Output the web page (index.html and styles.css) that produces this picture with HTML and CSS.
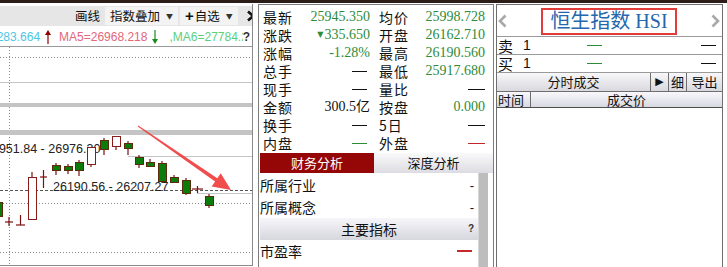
FILE: index.html
```html
<!DOCTYPE html>
<html lang="zh-CN">
<head>
    <meta charset="UTF-8">
    <title>恒生指数 HSI</title>
    <link rel="stylesheet" href="styles.css">
</head>
<body>
    <div class="topbar"></div>
    <div class="main">

        <!-- K-line panel -->
        <div class="chart-panel">
            <div class="toolbar">
                <span class="tool">画线</span>
                <span class="tool tool-box">指数叠加<i class="caret">▼</i></span>
                <span class="tool tool-box"><b class="plus">+</b>自选<i class="caret">▼</i></span>
                <svg class="tool-end" width="14" height="12" viewBox="0 0 14 12">
                    <polyline points="2,1.5 7,6 2,10.5" fill="none" stroke="#111" stroke-width="2.6"/>
                    <rect x="10" y="1" width="2.6" height="10" fill="#111"/>
                </svg>
            </div>
            <div class="ma-row">
                <span class="ma-cyan">3283.664</span>
                <svg class="ma-arrow" width="6" height="14" viewBox="0 0 6 14">
                    <line x1="3" y1="2" x2="3" y2="14" stroke="#8b0000" stroke-width="1.2"/>
                    <polygon points="0,5 3,0 6,5" fill="#8b0000"/>
                </svg>
                <span class="ma-red">MA5=26968.218</span>
                <svg class="ma-arrow" width="6" height="14" viewBox="0 0 6 14">
                    <line x1="3" y1="0" x2="3" y2="12" stroke="#1a8a1a" stroke-width="1.2"/>
                    <polygon points="0,9 3,14 6,9" fill="#1a8a1a"/>
                </svg>
                <span class="ma-green">,MA6=27784.23</span>
                <span class="ma-help">?</span>
            </div>
            <svg class="chart" width="252" height="218" viewBox="0 47 252 218">
                <g stroke="#8c8c8c" stroke-dasharray="1 2">
                    <line x1="9.5" y1="47" x2="9.5" y2="265"/>
                    <line x1="0" y1="57.5" x2="252" y2="57.5"/>
                    <line x1="0" y1="203.5" x2="252" y2="203.5"/>
                    <line x1="0" y1="252.5" x2="252" y2="252.5"/>
                </g>
                <line x1="0" y1="82.5" x2="252" y2="82.5" stroke="#c4c4c4"/>
                <rect x="0" y="103" width="252" height="4" fill="#c4c4c4"/>
                <rect x="0" y="130" width="252" height="5" fill="#c4c4c4"/>
                <line x1="128" y1="156.5" x2="252" y2="156.5" stroke="#c4c4c4"/>
                <line x1="197" y1="193.5" x2="252" y2="193.5" stroke="#c4c4c4"/>
                <line x1="0" y1="190.5" x2="252" y2="190.5" stroke="#555" stroke-dasharray="3 2"/>

                <text class="range" x="-15" y="153">26951.84 - 26976.30</text>
                <text class="range" x="53" y="191">26190.56 - 26207.27</text>

                <!-- wicks and crosses -->
                <g stroke="#7a1010" stroke-width="1.2">
                    <line x1="5" y1="222" x2="13" y2="222"/>
                    <line x1="9" y1="217" x2="9" y2="226"/>
                    <line x1="20.5" y1="215" x2="20.5" y2="225"/>
                    <line x1="16" y1="225" x2="25" y2="225"/>
                    <line x1="32" y1="172" x2="32" y2="177"/>
                    <line x1="40" y1="177" x2="47" y2="177"/>
                    <line x1="43.5" y1="170" x2="43.5" y2="188"/>
                    <line x1="56" y1="163" x2="56" y2="175"/>
                    <line x1="68" y1="164" x2="68" y2="174"/>
                    <line x1="79" y1="160" x2="79" y2="176"/>
                    <line x1="91" y1="164" x2="91" y2="167"/>
                    <line x1="104" y1="138" x2="104" y2="155"/>
                    <line x1="116" y1="146" x2="116" y2="150"/>
                    <line x1="128" y1="141" x2="128" y2="155"/>
                    <line x1="139" y1="155" x2="139" y2="168"/>
                    <line x1="150" y1="159" x2="150" y2="167"/>
                    <line x1="162" y1="161" x2="162" y2="183"/>
                    <line x1="174" y1="175" x2="174" y2="183"/>
                    <line x1="186" y1="178" x2="186" y2="195"/>
                    <line x1="192" y1="189" x2="203" y2="189"/>
                    <line x1="197.5" y1="186" x2="197.5" y2="193"/>
                    <line x1="209" y1="194" x2="209" y2="208"/>
                </g>

                <!-- falling candles -->
                <g fill="#0b7b0b" stroke="#5a2a0a">
                    <rect x="-5.5" y="202.5" width="8" height="14"/>
                    <rect x="52.5" y="165.5" width="8" height="5"/>
                    <rect x="64.5" y="166.5" width="8" height="4"/>
                    <rect x="75.5" y="162.5" width="8" height="8"/>
                    <rect x="100.5" y="140.5" width="8" height="9"/>
                    <rect x="124.5" y="143.5" width="8" height="5"/>
                    <rect x="135.5" y="157.5" width="8" height="7"/>
                    <rect x="146.5" y="162.5" width="8" height="4"/>
                    <rect x="158.5" y="163.5" width="8" height="18"/>
                    <rect x="170.5" y="177.5" width="8" height="5"/>
                    <rect x="182.5" y="180.5" width="8" height="13"/>
                    <rect x="205.5" y="196.5" width="8" height="9"/>
                </g>

                <!-- rising candles -->
                <g fill="#fff" stroke="#8b1a1a">
                    <rect x="28.5" y="177.5" width="8" height="42"/>
                    <rect x="87.5" y="147.5" width="8" height="17"/>
                    <rect x="112.5" y="136.5" width="8" height="10"/>
                </g>

                <polygon class="arrow" points="138.3,125.6 217.3,178.2 220.7,173.2 231,190 211.7,186.4 215.1,181.4 137.7,126.4"/>
            </svg>
        </div>

        <!-- Quote panel -->
        <div class="quote-panel">
            <div class="quote-grid">
                <span class="q-label">最新</span><span class="q-val up">25945.350</span>
                <span class="q-label q-label2">均价</span><span class="q-val up">25998.728</span>

                <span class="q-label">涨跌</span><span class="q-val up"><i class="tri">▼</i>335.650</span>
                <span class="q-label q-label2">开盘</span><span class="q-val up">26162.710</span>

                <span class="q-label">涨幅</span><span class="q-val up">-1.28%</span>
                <span class="q-label q-label2">最高</span><span class="q-val up">26190.560</span>

                <span class="q-label">总手</span><span class="q-val"><i class="dash"></i></span>
                <span class="q-label q-label2">最低</span><span class="q-val up">25917.680</span>

                <span class="q-label">现手</span><span class="q-val"><i class="dash"></i></span>
                <span class="q-label q-label2">量比</span><span class="q-val"><i class="dash"></i></span>

                <span class="q-label">金额</span><span class="q-val">300.5亿</span>
                <span class="q-label q-label2">按盘</span><span class="q-val up">0.000</span>

                <span class="q-label">换手</span><span class="q-val"><i class="dash"></i></span>
                <span class="q-label q-label2">5日</span><span class="q-val"><i class="dash"></i></span>

                <span class="q-label">内盘</span><span class="q-val"><i class="dash dash-green"></i></span>
                <span class="q-label q-label2">外盘</span><span class="q-val"><i class="dash dash-red"></i></span>
            </div>

            <div class="tabs">
                <span class="tab tab-active">财务分析</span>
                <span class="tab">深度分析</span>
            </div>

            <div class="info">
                <div class="info-list">
                    <div class="info-row"><span>所属行业</span><span class="info-val">-</span></div>
                    <div class="info-row"><span>所属概念</span><span class="info-val">-</span></div>
                    <div class="info-head">主要指标<span class="info-help">?</span></div>
                    <div class="info-row"><span>市盈率</span><span class="info-dash"></span></div>
                </div>
                <div class="scrollbar"></div>
            </div>
        </div>

        <!-- Order book / trades panel -->
        <div class="depth-panel">
            <div class="title-row">
                <svg width="9" height="14" viewBox="0 0 9 14"><polyline points="7.5,1.5 2,7 7.5,12.5" fill="none" stroke="#a8a8a8" stroke-width="2.6"/></svg>
                <span class="title">恒生指数 HSI</span>
                <svg width="9" height="14" viewBox="0 0 9 14"><polyline points="1.5,1.5 7,7 1.5,12.5" fill="none" stroke="#a8a8a8" stroke-width="2.6"/></svg>
            </div>
            <div class="book-row">
                <span class="book-label">卖</span><span class="book-num">1</span>
                <i class="dash dash-green book-dash"></i>
                <i class="dash book-dash book-last"></i>
            </div>
            <div class="book-row">
                <span class="book-label">买</span><span class="book-num">1</span>
                <i class="dash dash-green book-dash"></i>
                <i class="dash book-dash book-last"></i>
            </div>
            <div class="trade-bar">
                <span class="trade-title">分时成交</span>
                <span class="trade-btn trade-play">▶</span>
                <span class="trade-btn">细</span>
                <span class="trade-btn trade-export">导出</span>
            </div>
            <div class="trade-head">
                <span class="th-time">时间</span>
                <span class="th-price">成交价</span>
            </div>
        </div>
    </div>
</body>
</html>
```

FILE: styles.css
```css
* {
    box-sizing: border-box;
}
body {
    margin: 0;
    width: 727px;
    height: 267px;
    overflow: hidden;
    background: #fff;
    color: #111;
    font-family: "Noto Sans CJK SC", sans-serif;
}
i {
    font-style: normal;
}
.topbar {
    height: 3px;
    background: #2d1d19;
}
.main {
    display: flex;
    align-items: flex-start;
    padding-top: 1px;
}

/* chart */
.chart-panel {
    flex: none;
    width: 253px;
    height: 262px;
    padding-top: 2px;
    border-right: 1px solid #8a8a8a;
    border-bottom: 1px solid #8a8a8a;
    overflow: hidden;
}
.toolbar {
    display: flex;
    align-items: center;
    height: 20px;
    padding-left: 75px;
    background: #e6e6e6;
    font-size: 12.5px;
    line-height: 16px;
    white-space: nowrap;
}
.tool {
    flex: none;
    margin-right: 5px;
}
.tool-box {
    display: flex;
    align-items: center;
    height: 18px;
    padding: 0 5px;
    background: #f3f3f3;
    margin-right: 2px;
}
.plus {
    font-family: "Liberation Sans", sans-serif;
    font-size: 15px;
    margin-right: 1px;
}
.caret {
    font-size: 7px;
    margin-left: 6px;
    color: #333;
}
.tool-end {
    flex: none;
    margin-left: 6px;
}
.ma-row {
    display: flex;
    align-items: center;
    height: 21px;
    padding-top: 2px;
    border-bottom: 1px solid #9a9a9a;
    white-space: nowrap;
    overflow: hidden;
    font-family: "Liberation Sans", sans-serif;
    font-size: 12px;
}
.ma-cyan {
    flex: none;
    margin-left: -10px;
    color: #4ec6e6;
}
.ma-red {
    flex: none;
    color: #e4667a;
}
.ma-green {
    flex: 0 1 auto;
    min-width: 0;
    overflow: hidden;
    color: #5ccf7c;
    margin-left: 3px;
}
.ma-arrow {
    flex: none;
    margin: 0 8px 0 5px;
}
.ma-help {
    flex: none;
    margin: 0 2px 0 auto;
    font-weight: bold;
    font-size: 12px;
    color: #333;
}
.chart {
    display: block;
}
.range {
    font-family: "Liberation Sans", sans-serif;
    font-size: 12.5px;
    fill: #222;
}
.arrow {
    fill: #f03a3a;
    opacity: 0.9;
}

/* quote */
.quote-panel {
    flex: none;
    width: 236px;
    height: 270px;
    margin-left: 5px;
    border: 1px solid #7d7d7d;
    overflow: hidden;
}
.quote-grid {
    display: grid;
    grid-template-columns: 40px 67px 49px 66px;
    grid-auto-rows: 18px;
    padding: 3px 0 0 4px;
    line-height: 18px;
}
.q-label {
    font-size: 14px;
    letter-spacing: 1px;
    white-space: nowrap;
}
.q-label2 {
    padding-left: 9px;
}
.q-val {
    display: flex;
    align-items: center;
    justify-content: flex-end;
    font-family: "Liberation Serif", "Noto Sans CJK SC", serif;
    font-size: 14px;
    color: #111;
}
.q-val.up {
    color: #2e8b3a;
}
.tri {
    font-family: "DejaVu Sans", sans-serif;
    font-size: 8px;
    margin-right: 1px;
}
.dash {
    display: inline-block;
    width: 15px;
    height: 1px;
    background: #111;
    margin-right: 3px;
}
.q-label2 + .q-val .dash {
    width: 17px;
    margin-right: 0;
}
.dash-green {
    background: #2e8b3a;
}
.dash-red {
    background: #c0282a;
}
.tabs {
    display: flex;
    height: 20px;
    margin: 1px 0 0 1px;
    font-size: 13px;
    line-height: 20px;
}
.tab {
    flex: 1;
    text-align: center;
    background: linear-gradient(#fafafa, #dcdce2);
}
.tab-active {
    flex: none;
    width: 114px;
    background: #950606;
    color: #fff;
}
.info {
    display: flex;
    padding-left: 1px;
}
.info-list {
    flex: none;
    width: 218px;
    padding-top: 1px;
    font-size: 14px;
}
.info-row {
    display: flex;
    align-items: center;
    justify-content: space-between;
    height: 22px;
    padding-right: 4px;
}
.info-val {
    font-family: "Liberation Sans", sans-serif;
    font-size: 13px;
}
.info-dash {
    flex: none;
    width: 15px;
    height: 2px;
    margin-right: 2px;
    background: #c8282a;
}
.info-head {
    position: relative;
    height: 22px;
    line-height: 22px;
    text-align: center;
    background: linear-gradient(#f6f6fa, #d6d6de);
}
.info-help {
    position: absolute;
    right: 4px;
    top: 0;
    font-family: "Liberation Sans", sans-serif;
    font-size: 10px;
    font-weight: bold;
    color: #333;
}
.scrollbar {
    flex: none;
    width: 10px;
    height: 100px;
    background: #bdbdbd;
    border-left: 1px solid #d6d6d6;
}

/* depth */
.depth-panel {
    flex: none;
    width: 227px;
    height: 270px;
    margin-left: 2px;
    border: 1px solid #6e6e6e;
    overflow: hidden;
}
.title-row {
    display: flex;
    align-items: center;
    justify-content: space-between;
    height: 32px;
    padding: 0 2px 0 1px;
    border-bottom: 1px solid #9a9a9a;
}
.title {
    width: 136px;
    height: 27px;
    margin-top: 1px;
    border: 2px solid #e03c3c;
    color: #2667ad;
    font-family: "Liberation Serif", "Noto Sans CJK SC", serif;
    font-size: 20px;
    line-height: 22px;
    text-align: center;
}
.book-row {
    display: flex;
    align-items: center;
    height: 18px;
    border-bottom: 1px solid #9a9a9a;
    font-size: 14px;
    line-height: 17px;
}
.book-label {
    width: 26px;
    padding-left: 1px;
    font-size: 15px;
}
.book-num {
    width: 64px;
    font-family: "Liberation Sans", sans-serif;
}
.book-dash {
    margin: 0;
}
.book-last {
    margin-left: auto;
    margin-right: 6px;
}
.trade-bar {
    display: flex;
    height: 19px;
    border-bottom: 1px solid #6e6e6e;
    background: linear-gradient(#f8f8fa, #d8d8de);
    font-size: 13px;
    line-height: 18px;
}
.trade-title {
    width: 153px;
    text-align: center;
}
.trade-btn {
    width: 18px;
    text-align: center;
    border-left: 1px solid #6e6e6e;
}
.trade-play {
    font-family: "DejaVu Sans", sans-serif;
    font-size: 11px;
}
.trade-export {
    flex: 1;
}
.trade-head {
    display: flex;
    height: 16px;
    border-bottom: 1px solid #4e4e4e;
    background: linear-gradient(#f8f8fc, #d8d8e2);
    font-size: 13px;
    line-height: 16px;
}
.th-time {
    width: 34px;
    padding-left: 1px;
    border-right: 1px solid #6e6e6e;
}
.th-price {
    flex: 1;
    text-align: center;
}
```
